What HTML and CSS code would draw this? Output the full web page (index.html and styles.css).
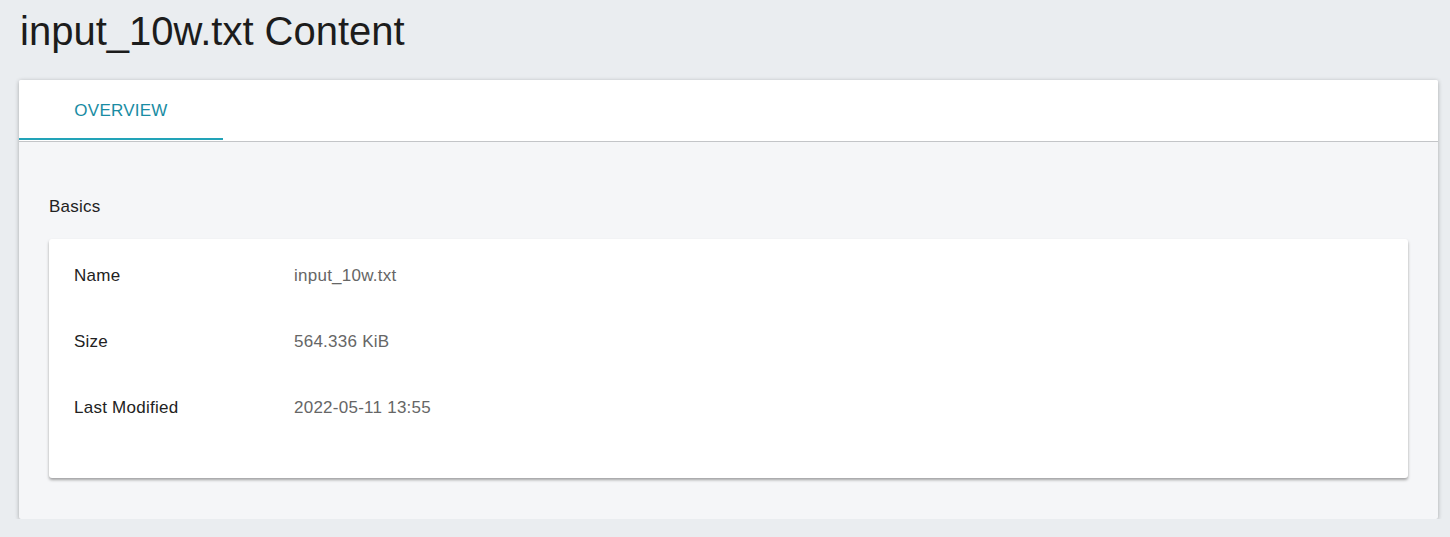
FILE: index.html
```html
<!DOCTYPE html>
<html>
<head>
<meta charset="utf-8">
<link rel="stylesheet" href="styles.css">
</head>
<body>
<div class="page">
  <h1 class="title">input_10w.txt Content</h1>
  <div class="panel">
    <div class="tabs">
      <div class="tab active">OVERVIEW</div>
    </div>
    <div class="panel-body">
      <div class="section-title">Basics</div>
      <div class="card">
        <div class="row"><div class="label">Name</div><div class="value">input_10w.txt</div></div>
        <div class="row"><div class="label">Size</div><div class="value">564.336 KiB</div></div>
        <div class="row"><div class="label">Last Modified</div><div class="value">2022-05-11 13:55</div></div>
      </div>
    </div>
  </div>
</div>
</body>
</html>
```

FILE: styles.css
```css
html, body {
  margin: 0;
  padding: 0;
  background: #eaedf0;
  font-family: "Liberation Sans", Arial, sans-serif;
  color: #222;
}
.page {
  padding: 0 12px 0 19px;
}
.title {
  margin: 0;
  padding: 8px 0 0 1px;
  height: 80px;
  box-sizing: border-box;
  font-size: 40px;
  font-weight: normal;
  line-height: 46px;
  color: #1c1c1c;
}
.panel {
  background: #f5f6f8;
  box-shadow: 0 1px 4px rgba(0,0,0,0.3);
  border-radius: 2px;
  overflow: hidden;
}
.tabs {
  display: flex;
  align-items: flex-start;
  background: #fff;
  height: 61px;
  border-bottom: 1px solid #c3c5c8;
}
.tab {
  width: 204px;
  height: 60px;
  box-sizing: border-box;
  display: flex;
  align-items: center;
  justify-content: center;
  padding-top: 4px;
  font-size: 17px;
  letter-spacing: 0.25px;
  color: #1a8ca3;
}
.tab.active {
  border-bottom: 2px solid #22a3b8;
}
.panel-body {
  padding: 54px 30px 41px 30px;
}
.section-title {
  font-size: 17px;
  letter-spacing: 0.25px;
  line-height: 22px;
  color: #222;
  margin-bottom: 21px;
}
.card {
  background: #fff;
  border-radius: 3px;
  box-shadow: 0 2px 3px rgba(0,0,0,0.35);
  padding: 26px 25px 46px 25px;
  height: 239px;
  box-sizing: border-box;
}
.row {
  display: flex;
  height: 66px;
  align-items: flex-start;
  font-size: 17px;
  letter-spacing: 0.25px;
  line-height: 22px;
}
.label {
  width: 220px;
  color: #222;
}
.value {
  color: #666;
}
```
